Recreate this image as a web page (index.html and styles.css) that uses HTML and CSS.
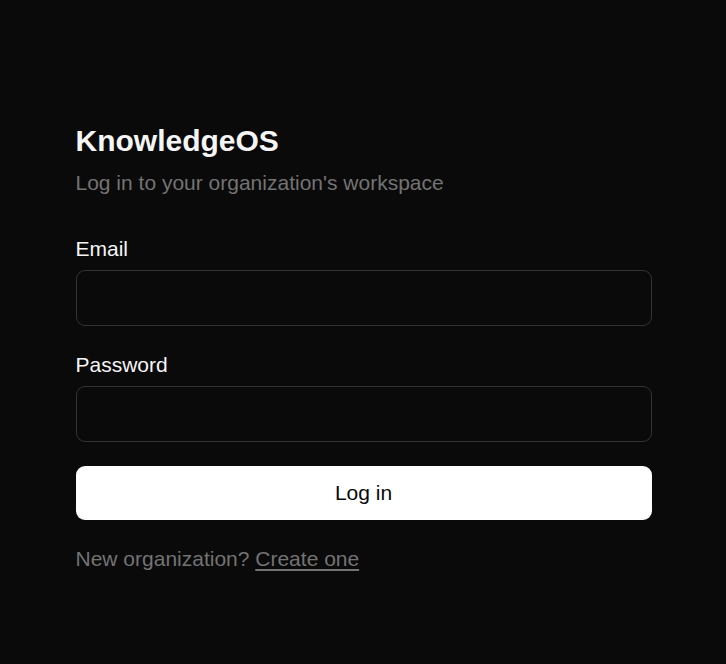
FILE: index.html
```html
<!DOCTYPE html>
<html lang="en">
<head>
<meta charset="utf-8">
<title>KnowledgeOS – Log in</title>
<link rel="stylesheet" href="styles.css">
</head>
<body>
<main class="page">
  <div class="card">
    <h1 class="title">KnowledgeOS</h1>
    <p class="subtitle">Log in to your organization's workspace</p>
    <form class="form">
      <div class="field">
        <label class="label" for="email">Email</label>
        <input class="input" id="email" type="email">
      </div>
      <div class="field">
        <label class="label" for="password">Password</label>
        <input class="input" id="password" type="password">
      </div>
      <button class="button" type="button">Log in</button>
    </form>
    <p class="footer">New organization? <a class="link" href="#">Create one</a></p>
  </div>
</main>
</body>
</html>
```
FILE: styles.css
```css
html, body {
  margin: 0;
  padding: 0;
  background: #0a0a0a;
  font-family: "Liberation Sans", Arial, sans-serif;
}
.page {
  min-height: 664px;
  display: flex;
  justify-content: center;
  padding-top: 120px;
  box-sizing: border-box;
}
.card {
  width: 576px;
  margin-left: 1px;
}
.title {
  margin: 0;
  font-size: 30px;
  line-height: 42px;
  font-weight: 700;
  color: #f5f5f5;
}
.subtitle {
  margin: 6px 0 0;
  font-size: 21px;
  line-height: 30px;
  color: #737373;
}
.form {
  margin-top: 36px;
  display: flex;
  flex-direction: column;
  gap: 24px;
}
.field {
  display: flex;
  flex-direction: column;
}
.label {
  font-size: 21px;
  line-height: 30px;
  color: #f5f5f5;
  margin-bottom: 6px;
}
.input {
  height: 56px;
  box-sizing: border-box;
  border: 1.5px solid #333333;
  border-radius: 9px;
  background: #0a0a0a;
  color: #f5f5f5;
  font-family: inherit;
  font-size: 21px;
  padding: 0 18px;
  outline: none;
}
.button {
  height: 54px;
  border: none;
  border-radius: 9px;
  background: #ffffff;
  color: #0a0a0a;
  font-family: inherit;
  font-size: 21px;
  cursor: pointer;
}
.footer {
  margin: 24px 0 0;
  font-size: 21px;
  line-height: 30px;
  color: #737373;
}
.link {
  color: #737373;
  text-decoration: underline;
  text-underline-offset: 3px;
}
```
